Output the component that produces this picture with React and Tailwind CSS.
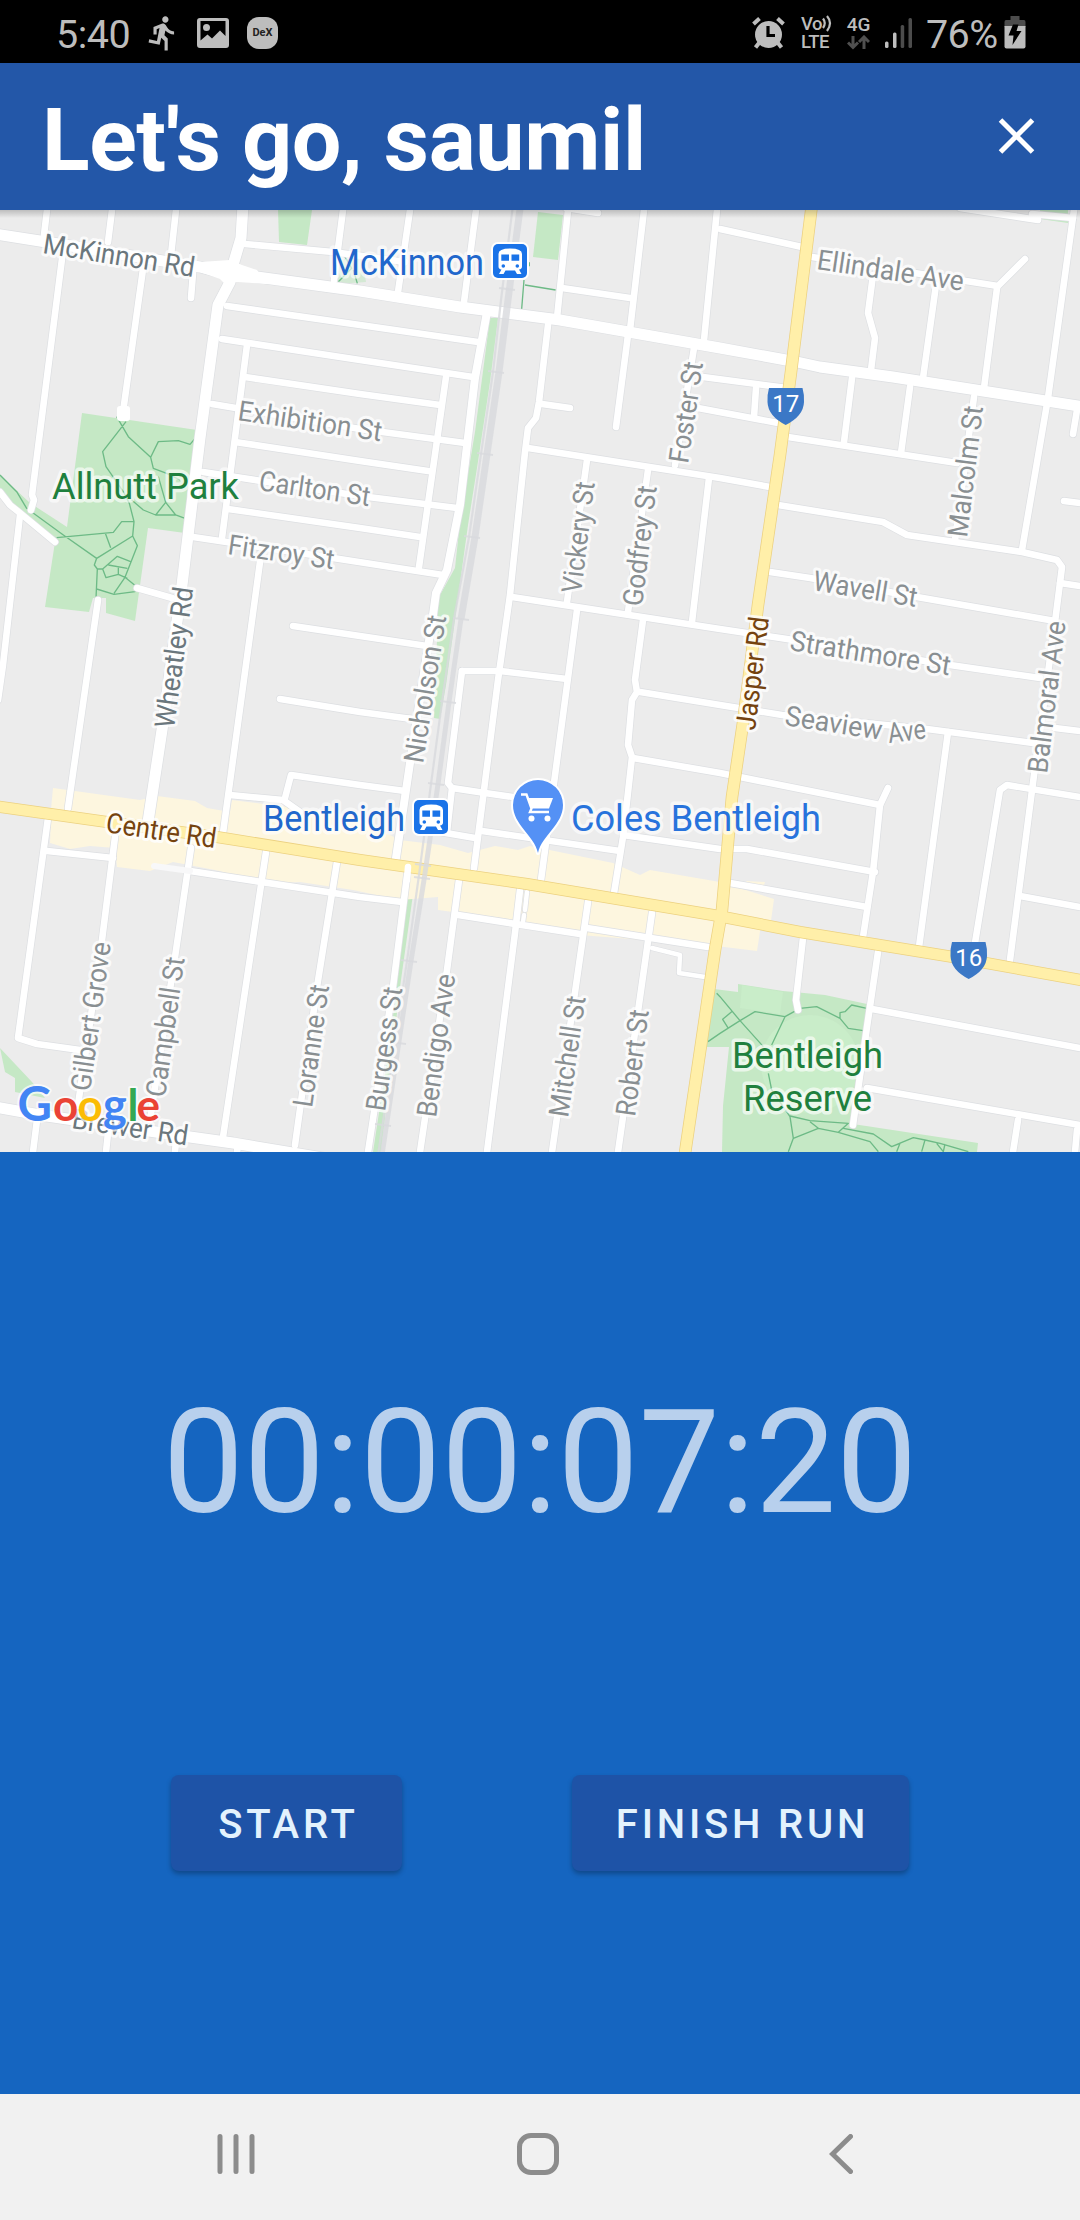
import React from "react";
import { MdDirectionsRun } from "react-icons/md";

const FONT = "font-['Roboto',sans-serif]";

/* ---------- Status bar ---------- */

function StatusBar() {
  return (
    <div className="flex h-[63px] shrink-0 items-center justify-between bg-black pr-[54px] pl-[56px] text-[#bdbdbd]">
      <div className="flex items-center">
        <span className="mt-[6px] w-[75px] text-[39.5px] leading-none tracking-[-0.5px]">5:40</span>
        <MdDirectionsRun className="ml-[13px] mt-[2px] size-[38px]" />
        <svg className="ml-[15px] mt-[2px] h-[30px] w-[32px]" viewBox="0 0 32 30">
          <path
            fillRule="evenodd"
            fill="#bdbdbd"
            d="M3 0H29a3 3 0 0 1 3 3V27a3 3 0 0 1-3 3H3a3 3 0 0 1-3-3V3a3 3 0 0 1 3-3ZM3.500 3V22.500L10.500 16.500L15 20.500L23 12.500L28.500 18V3ZM9.500 6a3.500 3.500 0 1 1 0 7a3.500 3.500 0 0 1 0-7Z"
          />
        </svg>
        <div className="ml-[18px] mt-[2px] flex h-[32px] w-[31px] items-center justify-center rounded-[12px] bg-[#bdbdbd] text-[11px] font-bold leading-none text-[#222]">
          DeX
        </div>
      </div>
      <div className="flex items-center">
        <svg className="mt-[2px] h-[32px] w-[33px]" viewBox="0 0 33 32">
          <circle cx="16.500" cy="17.500" r="13.500" fill="#bdbdbd" />
          <path d="M1.500 7L7.500 1.500M31.500 7L25.500 1.500" stroke="#bdbdbd" strokeWidth="4" />
          <path d="M7 26L3.500 30.500M26 26L29.500 30.500" stroke="#bdbdbd" strokeWidth="4" />
          <path d="M16 9V18.500H23" fill="none" stroke="#000" strokeWidth="3.200" />
        </svg>
        <div className="ml-[16px] mt-[2px] flex w-[32px] flex-col text-[18.5px] font-medium leading-[18px] tracking-[-0.5px]">
          <span className="flex items-center">
            Vo
            <svg className="h-[17px] w-[10px]" viewBox="0 0 10 17">
              <path d="M1 3.500Q4.500 8 1 13M5 1Q11 8 5 16" fill="none" stroke="#bdbdbd" strokeWidth="2.200" />
            </svg>
          </span>
          <span>LTE</span>
        </div>
        <div className="ml-[13px] mt-[2px] flex w-[25px] flex-col items-center">
          <span className="text-[19px] font-medium leading-[18px]">4G</span>
          <svg className="mt-[1px] h-[15px] w-[23px]" viewBox="0 0 23 15">
            <path d="M6 1V12M1 7.500L6 12.500L11 7.500M17 14V2M12 7L17 2L22 7" fill="none" stroke="#505050" strokeWidth="3" />
          </svg>
        </div>
        <svg className="ml-[14px] mt-[2px] h-[30px] w-[27px]" viewBox="0 0 27 30">
          <rect x="0" y="23.500" width="3.500" height="6.500" rx="1.500" fill="#bdbdbd" />
          <rect x="8" y="14.500" width="3.500" height="15.500" rx="1.500" fill="#bdbdbd" />
          <rect x="15.700" y="7" width="3.500" height="23" rx="1.500" fill="#4c4c4c" />
          <rect x="23.500" y="0" width="3.500" height="30" rx="1.500" fill="#4c4c4c" />
        </svg>
        <span className="ml-[14px] mt-[6px] w-[73px] whitespace-nowrap text-[39.5px] leading-none tracking-[-0.6px]">76%</span>
        <svg className="ml-[5px] mt-[2px] h-[33px] w-[22px]" viewBox="0 0 22 33">
          <path d="M6.500 0H15.500V4H20Q21.500 4 21.500 6V11H.5V6Q.5 4 2 4H6.500Z" fill="#4c4c4c" />
          <path d="M.5 10H21.500V30.500Q21.500 32.500 19.500 32.500H2.500Q.5 32.500 .5 30.500Z" fill="#bdbdbd" />
          <path d="M9 8.500H14.500L12.500 15H17.500L8.500 29L9.500 19.500H4.500Z" fill="#000" />
        </svg>
      </div>
    </div>
  );
}

/* ---------- Map data ---------- */

const MINOR = [
  "M47 210L44 235", "M112 210L108 242", "M176 210L171 255",
  "M64 243L32 495L34 500L31 510", "M144 262L123 412", "M193 273L191 298",
  "M0 492L10 505L20 513L55 542", "M20 515L3 665L-2 700", "M98 600L68 808", "M137 588L172 598",
  "M227 306L360 325L478 342", "M222 339L360 360L473 377", "M247 345L222 538",
  "M245 377L360 394L440 405", "M212 404L360 429L465 443", "M235 442L360 461L428 471",
  "M203 472L360 496L457 508", "M228 509L360 528L420 537", "M193 537L333 558L443 575",
  "M260 562L223 833", "M293 626L427 646", "M280 699L360 712L412 719",
  "M245 244L333 252L405 262", "M343 210L334 280", "M410 210L398 292", "M476 210L464 302",
  "M446 377L419 567", "M568 210L557 318", "M566 208L598 213", "M644 210L630 330",
  "M562 288L630 298", "M717 210L704 340",
  "M548 325L539 402L536 418L528 428L525 452L510 595L498 680L484 790L474 868",
  "M542 404L570 408", "M628 335L616 427", "M694 348L675 465", "M528 448L720 478L770 487",
  "M587 460L567 602", "M648 470L628 612", "M709 478L692 622",
  "M512 597L720 629L787 639L950 665L1040 678", "M577 610L554 783L541 880",
  "M643 620L635 680L637 692L632 700L628 745L632 757L623 837L614 893",
  "M462 671L500 671L567 679", "M462 671L448 783L452 788L447 832", "M452 788L485 793L520 798",
  "M440 832L475 838", "M482 831L620 851", "M230 795L283 800L300 812", "M285 798L291 775L360 785L405 791",
  "M640 692L720 705L782 715L927 729L1033 743", "M633 758L720 773L880 805L888 788",
  "M623 835L720 849L747 849L875 872", "M730 883L867 907", "M880 805L873 872L863 937",
  "M948 732L919 947", "M975 943L1000 790L1007 785L1080 797",
  "M1020 896L1080 907", "M1055 728L1080 731", "M878 952L867 1027L853 1125",
  "M803 938L796 1000L798 1010", "M872 1009L1080 1048", "M867 1088L1080 1125",
  "M1018 1120L1013 1152", "M1077 1130L1075 1152",
  "M720 229L802 247", "M812 257L998 286L1025 259", "M873 275L868 313L875 338L871 370",
  "M936 285L923 378", "M997 288L984 388", "M1074 210L1048 398L1022 550",
  "M960 208L1038 220", "M1032 214L1073 218", "M703 377L787 388", "M698 408L778 423",
  "M756 388L754 417", "M788 437L957 463", "M852 378L844 442", "M910 387L901 453",
  "M974 397L955 540", "M1077 410L1073 434", "M1064 501L1080 503",
  "M778 505L883 522L907 535L1022 552L1057 560L1062 567L1055 622L1034 775L1010 960",
  "M1060 583L1080 586", "M770 572L810 578L917 597L1055 621",
  "M48 818L18 1038L37 1044L80 1050", "M115 837L102 940L78 1105", "M191 848L175 957L150 1120",
  "M47 851L113 858", "M190 871L360 897L402 902", "M266 852L223 1137", "M337 862L317 987L295 1145",
  "M408 868L393 987L368 1152", "M459 880L447 970L420 1152", "M458 915L580 934", "M587 928L708 947",
  "M520 890L515 933L487 1152", "M588 902L552 1152", "M652 913L618 1152",
  "M37 1120L33 1152", "M108 1133L106 1152", "M176 1140L175 1152", "M238 1145L237 1152",
];

const NARROW = ["M652 948L680 955L679 973L705 977", "M527 892L525 910", "M524 915L523 922"];

const MAJOR = [
  "M-5 234L40 241L200 267L220 272L360 291L460 307L560 320L720 348L797 362L820 367L893 377L1085 407",
  "M243 205L241 238L233 265L230 282L218 305L200 438L182 585L162 730L148 822",
  "M-5 1107L40 1115L190 1137L233 1143L335 1160",
];

const MEDIUM = ["M487 312L475 378L460 505L447 570L436 593L433 615L410 763L396 858"];

const CENTRE_RD = "M-6 806L107 822L217 837L360 860L527 884L713 915L800 932L953 957L1086 981";
const JASPER_RD = "M812 204L791 372L780 455L758 605L743 723L732 797L722 910L715 950L684 1160";

const RAIL_TICKS = [
  [507, 289], [496, 372], [485, 454], [472, 537], [461, 619], [448, 702], [436, 784],
  [423, 865], [422, 878], [409, 961], [398, 1043], [383, 1125],
];

const GREY = "#898f92";
const SLATE = "#6b777d";
const BROWN = "#75430f";

const STREET_LABELS = [
  ["McKinnon Rd", 42, 253, 9, 153, SLATE],
  ["Exhibition St", 237, 420, 8.4, 145, GREY],
  ["Carlton St", 258, 490, 8.3, 112, GREY],
  ["Fitzroy St", 227, 554, 8.2, 107, GREY],
  ["Ellindale Ave", 816, 269, 8.5, 148, GREY],
  ["Wavell St", 812, 590, 9.3, 105, GREY],
  ["Strathmore St", 789, 650, 9, 162, GREY],
  ["Seaview", 784, 725, 8.7, 98, GREY],
  ["Ave", 889, 743, -7, 38, GREY],
  ["Centre Rd", 105, 832, 8.3, 111, BROWN],
  ["Brewer Rd", 71, 1128, 8.5, 117, SLATE],
  ["Wheatley Rd", 174, 729, -82.2, 142, SLATE],
  ["Foster St", 688, 464, -81.5, 102, GREY],
  ["Vickery St", 581, 594, -83, 112, GREY],
  ["Godfrey St", 642, 607, -83, 121, GREY],
  ["Malcolm St", 967, 538, -83, 132, GREY],
  ["Balmoral Ave", 1047, 774, -83, 153, GREY],
  ["Jasper Rd", 755, 731, -83, 114, BROWN],
  ["Nicholson St", 423, 764, -81, 149, GREY],
  ["Gilbert Grove", 90, 1092, -82, 150, GREY],
  ["Campbell St", 165, 1098, -82, 141, GREY],
  ["Loranne St", 312, 1108, -82, 123, GREY],
  ["Burgess St", 385, 1112, -82, 125, GREY],
  ["Bendigo Ave", 436, 1118, -82.3, 144, GREY],
  ["Mitchell St", 568, 1118, -81.7, 122, GREY],
  ["Robert St", 635, 1117, -82.5, 107, GREY],
];

const PLACE_LABELS = [
  ["McKinnon", 330, 275, 154, "#2167cc"],
  ["Bentleigh", 263, 831, 142, "#2167cc"],
  ["Coles Bentleigh", 571, 831, 250, "#2873dc"],
  ["Allnutt Park", 52, 499, 187, "#1f803e"],
  ["Bentleigh", 732, 1068, 151, "#1f803e"],
  ["Reserve", 743, 1111, 129, "#1f803e"],
];

const ALLNUTT_PATHS =
  "M350 635L385 695L452 757L475 710L535 707L570 718L588 697M378 650L308 740L318 785L370 860L388 895L402 950L398 993L412 1022L375 1117L342 1165M452 757L460 790L500 805L540 825M475 815L497 892L527 930L555 940M497 892L467 930L527 930M467 930L430 915L395 885M0 810L50 860L80 910L190 990L290 1060L398 993M170 998L340 982L365 950L402 950M316 985L332 1028M290 1060L283 1080L292 1092L288 1180M292 1092L308 1092L352 1054L392 1070M308 1092L318 1118L355 1108L382 1120M325 1080L382 1090M355 1085L355 1108M375 1117L410 1145L405 1160L342 1168L290 1152";

const RESERVE_PATHS =
  "M-10 940L0 950L60 1022L130 1100M-36 1085L0 1060L60 1022L105 995L195 1010L240 985L290 980L360 1015L385 1045L430 1052M360 1015L360 998L375 995L395 975L440 985M195 1010L155 1095M145 1180L155 1230L210 1310L220 1375L205 1415M35 995L8 1018L25 1045M210 1308L270 1322L385 1330L355 1357M270 1325L295 1345L220 1375M295 1345L355 1357L450 1385L475 1415M370 1345L460 1362L515 1400L580 1373L615 1380L660 1390L745 1415M615 1380L605 1415M515 1400L540 1390L530 1415M650 1390L670 1415L675 1392";

function RoadCasing({ paths, width }) {
  return (
    <g fill="none" stroke="#dddfe2" strokeWidth={width + 1.4} strokeLinecap="round" strokeLinejoin="round">
      {paths.map((d) => (
        <path key={d} d={d} />
      ))}
    </g>
  );
}

function RoadFill({ paths, width }) {
  return (
    <g fill="none" stroke="#fff" strokeWidth={width} strokeLinecap="round" strokeLinejoin="round">
      {paths.map((d) => (
        <path key={d} d={d} />
      ))}
    </g>
  );
}

function TrainIcon({ x, y }) {
  return (
    <g transform={`translate(${x} ${y})`}>
      <rect x="-2" y="-2" width="38" height="38" rx="7" fill="#fff" />
      <rect width="34" height="34" rx="5" fill="#1a73e8" />
      <path d="M5.500 10Q5.500 4.500 17.200 4.500Q29 4.500 29 10V22.500Q29 25 26 25.500L28.500 30H24L22 26.500H12.500L10.500 30H6L8.500 25.500Q5.500 25 5.500 22.500Z" fill="#fff" />
      <path d="M8.300 10.500H16V16.700H8.300ZM18.500 10.500H26.200V16.700H18.500Z" fill="#1a73e8" />
      <circle cx="10.300" cy="22" r="1.800" fill="#1a73e8" />
      <circle cx="24.300" cy="22" r="1.800" fill="#1a73e8" />
    </g>
  );
}

function Shield({ x, y, label }) {
  return (
    <g transform={`translate(${x} ${y})`}>
      <path d="M2 0H35.500Q37.300 6 37 14Q36.500 28 18.700 37Q1 28 .5 14Q.2 6 2 0Z" fill="#3b78c6" />
      <text x="18.700" y="24" fontSize="24" fill="#fff" textAnchor="middle">{label}</text>
    </g>
  );
}

function GoogleMark() {
  const letters = [
    ["G", 17.5, 47.5, "#4285f4"],
    ["o", 53, 44, "#ea4335"],
    ["o", 77.5, 44, "#fbbc05"],
    ["g", 103, 45, "#4285f4"],
    ["l", 127.5, 44, "#34a853"],
    ["e", 136.5, 44, "#ea4335"],
  ];
  return (
    <g className="font-['Lato',sans-serif] font-bold">
      {letters.map(([c, x, size, fill], i) => (
        <text key={i} x={x} y="1120.500" fontSize={size} fill={fill} stroke="#fff" strokeOpacity=".7" strokeWidth="4" strokeLinejoin="round" paintOrder="stroke">
          {c}
        </text>
      ))}
    </g>
  );
}

function MapView() {
  return (
    <svg className={`block h-[942px] w-full shrink-0 bg-[#ececec] ${FONT}`} viewBox="0 210 1080 942">
      <defs>
        <linearGradient id="bar-shadow" x1="0" y1="0" x2="0" y2="1">
          <stop offset="0" stopColor="#000" stopOpacity=".2" />
          <stop offset="1" stopColor="#000" stopOpacity="0" />
        </linearGradient>
      </defs>

      {/* parks */}
      <g fill="#c5e8c5">
        <path d="M82 413L197 430L185 533L148 528L135 621L106 613V598H93L89 612L45 607L55 542L22 513L0 490V475L30 503L67 527Z" />
        <path d="M278 210H312L307 245L279 242Z" />
        <path d="M338 260L362 258L366 282L338 284Z" opacity=".6" />
        <path d="M538 212L563 215L558 260L533 257Z" />
        <path d="M1040 210H1068V223L1040 219Z" />
        <path d="M490 318H498L490 382L477 468L468 525L457 605L446 685L440 719L434 718L437 640L438 600L440 595L455 568L460 522L475 432Z" />
        <path d="M411 873H416L400 987L381 1152H373L390 1040Z" />
        <path d="M0 1048L32 1082L45 1098L15 1092V1078L5 1072Z" />
        <path d="M714 989L738 992V984L783 991L825 995L867 1004L853 1124L978 1143L977 1152H722L723 1106L729 1047H705Z" />
      </g>
      <g fill="#c9edc9">
        <path d="M742 985L783 992L780 1014L740 1008Z" />
        <circle cx="810" cy="1064" r="49" />
      </g>

      {/* shopping strip */}
      <g fill="#fdf6df">
        <path d="M53 788L140 800L157 796L195 801L207 808L230 812L232 800L350 815L400 840L440 845L468 853L495 846L518 850L530 846L613 863L640 875L650 870L720 882L774 899L770 928L50 820Z" />
        <path d="M746 881L765 882L764 885L748 884Z" />
        <path d="M51 815L50 843L70 849L90 846L115 848L117 867L150 871L173 862L220 871L260 884L300 882L353 890L400 900L438 897V910L453 912L503 918L537 925L580 935L708 945L757 951L761 925Z" />
      </g>

      {/* footpaths */}
      <g fill="none" stroke="#6dba86" strokeWidth="4" strokeLinejoin="round">
        <path transform="translate(0 205) scale(.33333)" d={ALLNUTT_PATHS} />
        <path transform="translate(720 680) scale(.33333)" d={RESERVE_PATHS} />
        <path transform="translate(360 205) scale(.33333)" d="M492 225L485 312M495 240L587 255M508 172V184" />
        <path transform="translate(0 205) scale(.33333)" d="M1035 155L1055 190L1015 230M1060 195L1072 235" />
      </g>

      {/* streets */}
      <RoadCasing paths={MINOR} width={6.6} />
      <RoadCasing paths={NARROW} width={4.5} />
      <RoadCasing paths={MEDIUM} width={8} />
      <RoadCasing paths={MAJOR} width={11} />
      <RoadFill paths={MINOR} width={6.6} />
      <RoadFill paths={NARROW} width={4.5} />
      <RoadFill paths={MEDIUM} width={8} />
      <RoadFill paths={MAJOR} width={11} />
      <path d="M154 866L190 871" stroke="#f8f8f9" strokeWidth="6" strokeLinecap="round" />
      <path d="M200 272L220 279L224 283L238 282L267 284L257 270L242 265L230 260L200 262Z" fill="#fff" />
      <rect x="117" y="406" width="13" height="15" rx="3" fill="#fff" />

      {/* arterial roads */}
      <g fill="none">
        <path d={CENTRE_RD} stroke="#ecd180" strokeWidth="12" />
        <path d={JASPER_RD} stroke="#ecd180" strokeWidth="12.500" />
        <path d={CENTRE_RD} stroke="#ffefa9" strokeWidth="10.500" />
        <path d={JASPER_RD} stroke="#ffefa9" strokeWidth="11" />
        <path d="M408 867L407 880" stroke="#fff" strokeWidth="6.500" strokeLinecap="round" />
      </g>

      {/* railway */}
      <g fill="none" stroke="#d8dadd" strokeOpacity=".8">
        <path d="M520.500 205L508 300L499 372L487 454L475 537L461 619" strokeWidth="7" />
        <path d="M461 619L449 702L438 784L424 880L411 961L382 1155" strokeWidth="5" />
        <path d="M513 205L501 300L493 372L481 454L469 537L454 619L442 702L431 784L419 875L407 961L378 1155" strokeWidth="2.200" />
        {RAIL_TICKS.map(([x, y]) => (
          <path key={y} d={`M${x - 8} ${y - 1}L${x + 8} ${y + 1}`} strokeWidth="2.200" />
        ))}
      </g>

      {/* labels */}
      {STREET_LABELS.map(([text, x, y, angle, length, color]) => (
        <text
          key={text}
          transform={`translate(${x} ${y}) rotate(${angle})`}
          fontSize="28"
          fill={color}
          textLength={length}
          lengthAdjust="spacingAndGlyphs"
          stroke="#fff"
          strokeOpacity=".8"
          strokeWidth="6"
          strokeLinejoin="round"
          paintOrder="stroke"
        >
          {text}
        </text>
      ))}
      {PLACE_LABELS.map(([text, x, y, length, color]) => (
        <text
          key={`${text}${x}`}
          x={x}
          y={y}
          fontSize="37.500"
          fill={color}
          textLength={length}
          lengthAdjust="spacingAndGlyphs"
          stroke="#fff"
          strokeOpacity=".65"
          strokeWidth="7"
          strokeLinejoin="round"
          paintOrder="stroke"
        >
          {text}
        </text>
      ))}

      <TrainIcon x={493} y={244} />
      <TrainIcon x={414} y={800} />
      <Shield x={767} y={388} label="17" />
      <Shield x={950} y={942} label="16" />

      {/* supermarket pin */}
      <g transform="translate(538 805)">
        <path d="M0 48C-4 30-25 20-25 0A25 25 0 0 1 25 0C25 20 4 30 0 48Z" fill="#5491f5" stroke="#fff" strokeWidth="4" strokeLinejoin="round" paintOrder="stroke" />
        <path d="M-17-10.500H-11.500L-6.500 3.500L-8 7H11" fill="none" stroke="#fff" strokeWidth="2.400" />
        <path d="M-10.500-7H15L11 3.500H-6.500Z" fill="#fff" />
        <circle cx="-6.500" cy="13.500" r="3" fill="#fff" />
        <circle cx="9.500" cy="13.500" r="3" fill="#fff" />
      </g>

      <GoogleMark />
      <rect x="0" y="210" width="1080" height="8" fill="url(#bar-shadow)" />
    </svg>
  );
}

/* ---------- Controls ---------- */

function ActionButton({ children, className }) {
  return (
    <button
      className={`flex h-[96px] items-center justify-center rounded-[8px] bg-[#1e53a7] pt-[4px] pl-[4px] text-[40px] font-medium leading-none tracking-[3.800px] text-[#e3f2fd] shadow-[0_3px_5px_rgba(0,0,0,0.28)] ${className}`}
    >
      {children}
    </button>
  );
}

function NavBar() {
  return (
    <div className="flex h-[126px] shrink-0 items-center justify-between bg-[#f1f1f1] pr-[227px] pl-[217px]">
      <svg className="mt-[-6px] h-[40px] w-[38px]" viewBox="0 0 38 40">
        <path d="M3 2.500V37.500M19 2.500V37.500M35 2.500V37.500" stroke="#8c8c8c" strokeWidth="5" strokeLinecap="round" />
      </svg>
      <div className="mt-[-6px] ml-[-8px] h-[42px] w-[42px] rounded-[14px] border-[5px] border-[#8c8c8c]" />
      <svg className="mt-[-6px] h-[40px] w-[24px]" viewBox="0 0 24 40">
        <path d="M21.500 2.500L3.500 20L21.500 37.500" fill="none" stroke="#8c8c8c" strokeWidth="5" strokeLinecap="round" strokeLinejoin="miter" />
      </svg>
    </div>
  );
}

export default function App() {
  return (
    <div className={`flex h-[2220px] w-[1080px] flex-col overflow-hidden bg-[#1565c0] ${FONT}`}>
      <StatusBar />
      <header className="flex h-[147px] shrink-0 items-center justify-between bg-[#2357a8] pr-[45px] pl-[42px] text-white">
        <h1 className="pt-[7px] text-[88px] font-bold leading-none tracking-[-0.4px]">Let's go, saumil</h1>
        <svg className="mt-[-2px] h-[38px] w-[37px]" viewBox="0 0 37 38">
          <path d="M2.500 3L34.500 35M34.500 3L2.500 35" stroke="#fff" strokeWidth="5" />
        </svg>
      </header>
      <MapView />
      <main className="flex h-[942px] shrink-0 flex-col items-center pt-[238px]">
        <div className="whitespace-nowrap text-[144.5px] leading-[146px] text-[#b8d0ed]">00:00:07:20</div>
        <div className="mt-[239px] flex w-[738px] justify-between">
          <ActionButton className="w-[231px]">START</ActionButton>
          <ActionButton className="w-[337px]">FINISH RUN</ActionButton>
        </div>
      </main>
      <NavBar />
    </div>
  );
}
